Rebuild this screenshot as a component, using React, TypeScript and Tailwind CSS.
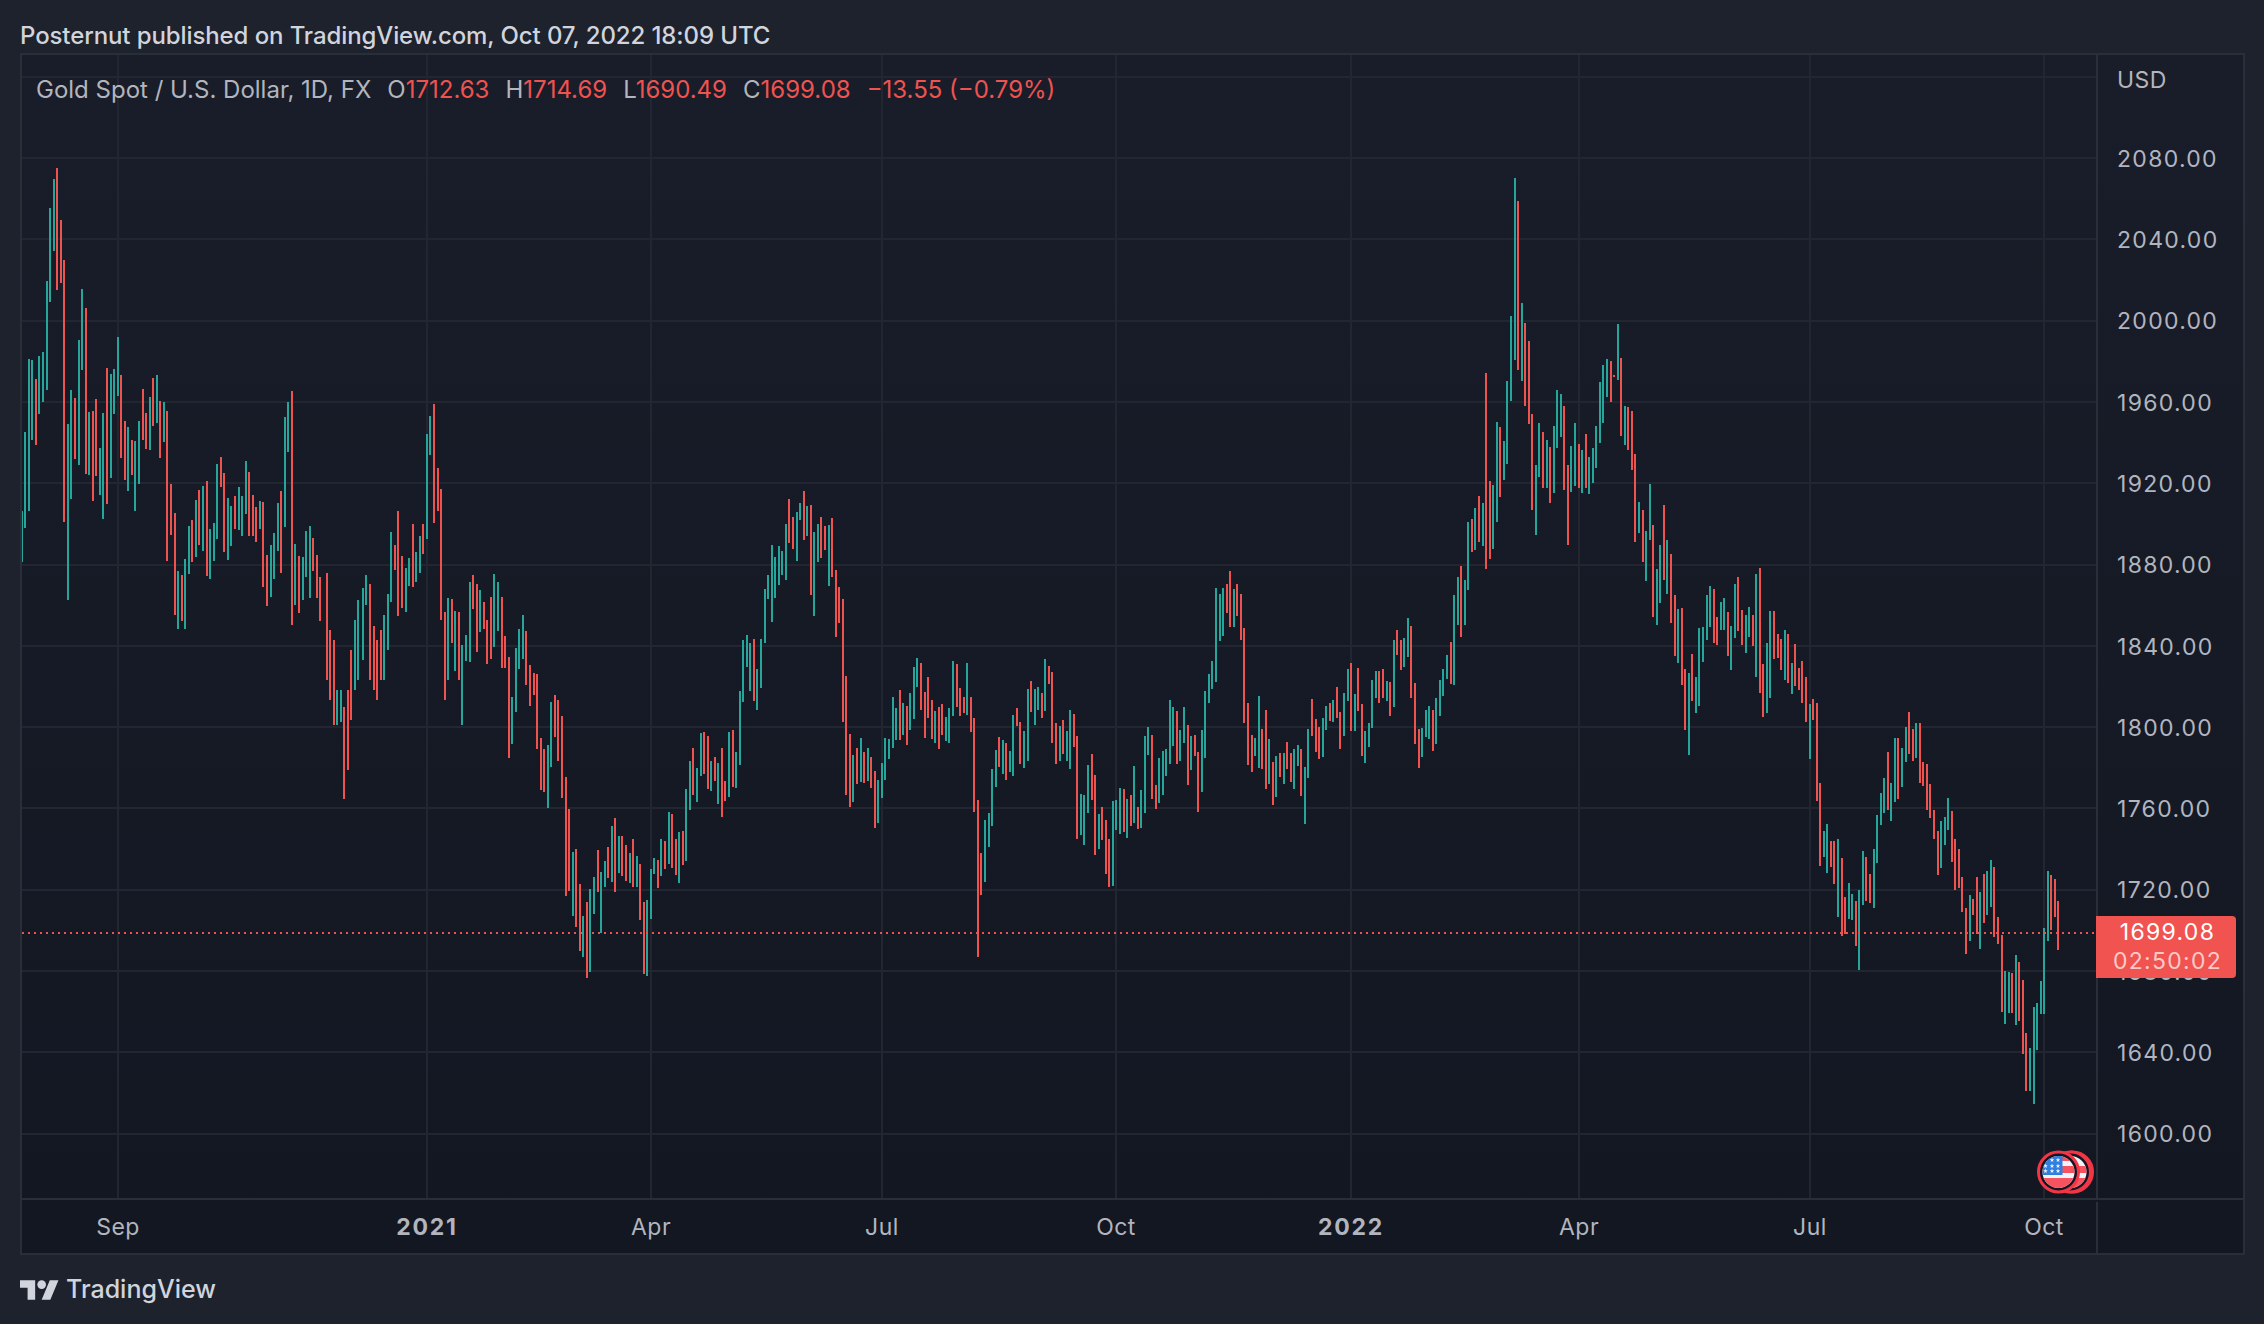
const crops = [
  {
    ox: 0, oy: 130, sy: 3,
    data: `g 66 1143 1296;g 75 906 1194;g 87 687 1143;g 96 690 930;r 108 747 945;g 117 678 852;g 129 666 816;g 141 453 780;g 150 234 516;g 162 147 363;r 171 114 480;r 183 270 459;r 192 390 1176;g 204 882 1410;g 213 780 1107;r 225 804 987;g 237 630 1005;g 246 477 720;r 258 534 1032;g 267 846 1035;r 279 843 1113;r 288 807 1038;g 300 954 1095;g 309 849 1167;r 321 714 1122;g 333 732 1044;g 342 717 852;g 354 621 798;r 363 735 984;r 375 873 1050;g 384 891 1083;r 396 930 1035;g 405 933 1143;g 417 873 1062;r 429 777 930;r 438 849 957;g 450 801 960;r 459 744 888;g 471 735 879;r 480 813 984;g 492 816 936;r 501 843 1293;r 513 1062 1215;r 525 1149 1455;g 534 1323 1497;r 546 1335 1473;g 555 1287 1497;g 567 1188 1332;r 576 1170 1296;g 588 1110 1281;r 597 1080 1245;g 609 1068 1263;r 621 1053 1338;g 630 1197 1347;g 642 1179 1293;g 651 1002 1227;r 663 981 1071;r 672 1029 1266;g 684 1104 1290;g 693 1128 1248;r 705 1098 1197;g 717 1071 1200;g 726 1098 1218;g 738 993 1152;r 747 1026 1218;r 759 1095 1218;r 768 1131 1236;g 780 1113 1197;r 789 1116 1371;r 801 1275 1428;g 813 1245 1401;g 822 1209 1347;g 834 1119 1263;r 843 1083 1329;g 855 861 1191;g 864 816 966;r 876 783 1485;g 885 1242 1425;r 897 1278 1449;g 909 1281 1410;g 918 1203 1341;g 930 1188 1404;r 939 1224 1323;r 951 1275 1404;r 960 1341 1473;g 1098 1335 1425;g 1173 1206 1416;r 1185 1245 1320;r 1194 1143 1458;r 1206 1278 1434;g 1218 1314 1446;g 1227 1284 1368;r 1239 1182 1371;g 1248 1266 1356;g 1260 1218 1329;r 1269 1182 1272;g 1281 912 1227;g 1290 858 975;r 1302 822 1179;r 1314 1014 1143`,
  },
  {
    // bars that run below the first crop, page pixels
    ox: 0, oy: 0, sy: 1, sx: 1,
    data: `r 327 573 680;r 330 630 700;r 334 640 725;g 337 690 725;g 341 690 722;r 344 707 799;r 348 690 770;r 351 650 720;g 355 620 690;g 358 600 680;g 363 588 660;r 370 584 680;r 374 626 690;r 377 640 700;r 381 630 680;g 384 615 680;g 388 594 650;r 441 489 620;r 445 612 700;g 448 598 680`,
  },
  {
    ox: 450, oy: 480, sy: 3,
    data: `r 6 357 489;g 15 393 573;r 27 396 600;g 36 495 735;g 48 465 543;g 60 306 546;r 69 285 387;r 81 312 516;g 90 330 456;r 102 366 447;r 111 420 552;r 123 351 537;g 132 282 501;g 144 306 453;r 156 351 564;r 165 468 564;r 177 531 834;g 186 651 792;g 198 504 696;g 207 447 567;g 219 405 537;r 228 453 615;r 240 555 678;r 252 579 645;r 261 582 807;r 273 774 930;r 282 807 936;g 294 795 984;g 303 666 861;r 315 645 771;r 324 660 843;r 336 708 954;r 348 891 1248;r 357 987 1233;g 369 1116 1308;r 378 1107 1341;r 390 1212 1413;g 399 1308 1431;r 411 1266 1494;g 420 1227 1476;g 432 1191 1302;r 444 1110 1236;g 453 1176 1359;g 465 1143 1221;r 474 1101 1194;g 486 1038 1206;r 495 1014 1236;g 507 1068 1179;r 516 1068 1188;r 528 1095 1203;g 540 1119 1209;r 549 1077 1221;g 561 1128 1221;r 570 1152 1320;r 582 1266 1482;g 591 1260 1488;g 603 1167 1317;g 612 1134 1182;r 624 1140 1224;g 633 1077 1188;r 645 1083 1167;g 657 996 1152;r 666 1002 1164;r 678 1077 1185;g 687 1056 1209;r 699 1053 1155;g 708 927 1143;g 720 843 990;r 729 804 945;g 741 864 966;g 753 759 888;r 762 756 882;r 774 768 927;g 783 843 933;r 795 831 903;g 804 849 972;r 816 804 1011;r 825 903 963;g 837 756 951;r 849 750 921;g 858 816 924;g 870 633 855;g 879 480 666;g 891 465 561;g 900 489 633;r 912 477 663;g 921 567 690;g 933 477 624;g 945 327 489;g 954 285 357;g 966 195 426;g 975 231 354;g 987 198 315`,
  },
  {
    ox: 780, oy: 470, sy: 3,
    data: `g 6 243 315;g 18 162 330;r 27 87 219;r 39 141 237;g 51 126 273;g 60 99 150;r 72 63 210;g 81 108 198;r 93 105 375;g 102 186 438;g 114 162 276;r 123 141 264;r 135 168 240;g 147 165 348;r 156 144 321;r 168 300 501;r 177 351 459;r 189 387 756;r 198 618 975;r 210 792 1011;g 219 855 996;r 231 834 942;g 243 804 936;r 252 846 939;g 264 834 933;r 273 861 954;r 285 903 1074;g 294 930 1059;g 306 879 984;g 315 804 930;g 327 807 867;g 339 681 834;g 348 714 810;r 360 660 810;g 369 699 795;r 381 708 825;g 390 669 780;g 402 591 747;g 411 564 651;r 423 579 720;r 435 666 804;r 444 621 744;r 456 690 807;g 465 723 819;r 477 711 837;r 486 702 795;g 498 741 813;g 507 714 819;g 519 573 738;r 531 582 711;r 540 654 738;r 552 681 729;g 561 579 735;r 573 681 786;r 582 744 1026;r 594 990 1461;r 603 1149 1275;g 615 1050 1236;g 627 1029 1131;g 636 897 1068;g 648 840 951;r 657 801 891;g 669 810 912;r 678 819 930;g 690 843 906;g 699 735 918;r 711 714 768;r 720 756 882;g 732 783 894;g 744 657 873;r 753 633 726;g 765 657 765;g 774 651 720;r 786 669 744;g 795 567 723;r 807 588 642;r 816 606 819;r 828 759 882;g 840 768 873;r 849 750 852;g 861 783 873;g 870 720 897;r 882 732 831;r 891 798 1107;g 903 972 1095;g 912 975 1125;g 924 885 1029;r 936 852 990;r 945 915 1155;g 957 1032 1137;r 966 1011 1110;r 978 1050 1212;r 987 1107 1251`,
  },
  {
    ox: 1110, oy: 550, sy: 3,
    data: `g 9 753 1008;g 18 750 840;g 30 714 852;r 42 717 846;g 51 747 864;r 63 735 828;g 72 648 819;r 84 771 837;g 93 720 834;g 105 558 789;g 114 531 615;r 126 555 747;r 138 705 777;g 147 624 759;g 159 603 735;g 168 597 678;g 180 450 642;g 189 471 588;r 201 483 642;g 210 540 633;g 222 471 579;r 234 525 705;g 243 558 660;r 255 555 618;r 264 606 786;g 276 540 726;g 285 423 624;g 297 372 459;g 306 333 417;g 318 114 396;g 330 132 273;g 339 114 258;r 351 102 189;r 360 63 231;g 372 117 231;r 381 102 198;r 393 132 270;r 402 234 519;r 414 459 645;r 426 555 666;g 435 564 618;g 447 438 654;r 456 537 657;r 468 480 717;g 477 567 702;r 489 636 765;g 498 618 741;r 510 609 681;g 522 609 702;r 531 576 657;r 543 609 696;g 552 597 717;g 564 585 648;r 573 597 738;g 585 651 822;g 594 537 684;r 606 447 558;r 618 507 606;r 627 531 627;g 639 504 621;g 648 468 540;r 660 459 513;g 669 450 516;r 681 411 504;r 690 486 597;g 702 429 558;g 714 357 453;r 723 339 543;g 735 432 543;r 744 354 483;r 756 462 618;g 765 543 639;g 777 519 591;g 786 390 534;g 798 363 444;r 807 363 459;r 819 357 444;g 831 393 453;r 840 396 498;g 852 270 471;r 861 240 315;r 873 270 360;g 882 264 351;g 894 204 321;r 903 228 444;r 915 399 582;r 927 537 654;g 936 534 621;g 948 480 561;g 957 468 567;r 969 480 603;g 978 444 582`,
  },
  {
    ox: 1440, oy: 420, sy: 3,
    data: `g 0 780 888;g 9 747 828;g 21 705 777;r 33 666 792;g 42 525 795;g 54 471 615;r 63 438 651;g 75 480 615;g 84 306 510;r 96 297 396;g 105 264 390;r 117 228 366;g 129 249 378;r 150 183 417;g 159 195 387;r 180 21 231;g 192 63 180;g 288 135 345;r 384 135 375;g 426 90 219;g 447 111 222;r 585 102 366;g 597 246 339;r 609 270 426;g 618 333 483;g 630 192 360;r 639 315 591;g 651 447 615;g 660 375 549;r 672 255 480;g 681 360 522;r 693 402 609;r 705 525 708;g 714 567 729;r 726 564 795;r 735 747 930;g 747 759 1005;r 756 702 843;g 768 771 879;g 777 624 858;g 789 621 726;g 801 525 660;g 810 498 621;r 822 507 669;r 831 591 675;g 843 546 630;g 852 534 630;r 864 576 708;g 873 618 750;g 885 492 654;r 894 471 633;r 906 570 675;g 918 585 699;g 927 561 651;r 939 585 678;g 948 462 771;r 960 444 819;r 969 732 891;g 981 669 879`,
  },
  {
    // top of the 2022 spike, x still in crop units, y in page pixels
    ox: 1440, oy: 0, sy: 1,
    data: `r 138 373 569;g 171 422 522;g 201 381 464;g 213 316 401;g 225 178 360;r 234 201 370;g 246 303 381;r 255 323 406;r 267 341 424;r 276 414 510;g 297 423 477;r 309 432 488;g 321 440 488;r 330 447 503;g 342 426 493;g 351 390 448;g 363 394 437;r 372 406 490;g 393 446 492;g 405 423 486;r 417 444 488;r 438 434 488;g 459 448 483;g 468 426 468;g 480 382 443;g 489 365 423;g 501 359 397;r 513 361 402;r 522 375 377;g 534 324 380;r 543 358 436;g 555 406 445;r 564 407 450;r 576 411 470`,
  },
  {
    ox: 1770, oy: 580, sy: 2.904,
    data: `g 1 90 343;r 12 90 229;r 24 157 226;r 33 171 261;g 45 145 290;r 54 157 299;g 66 241 331;r 75 186 308;r 87 256 319;r 96 235 357;r 108 282 412;g 120 360 520;r 129 346 407;r 141 357 642;r 150 589 830;g 162 729 804;g 171 709 851;r 183 758 833;r 192 758 883;g 204 752 979;r 216 807 1034;r 225 920 1028;g 237 880 984;g 246 912 987;r 258 932 1063;g 267 900 1132;g 279 787 944;r 288 804 932;r 300 854 938;g 312 781 952;g 321 682 822;g 333 618 711;g 342 575 677;r 354 499 668;g 363 589 700;g 375 459 645;r 384 459 636;g 396 488 601;g 408 427 528;r 417 383 505;r 429 433 526;g 438 415 517;r 450 415 589;r 459 528 598;r 471 534 668;r 480 592 691;r 492 668 752;r 504 729 857;g 513 700 836;g 525 688 769;g 534 633 726;r 546 671 819;r 555 752 900;r 567 781 894;r 576 862 964;r 588 952 1086;g 600 915 1048;r 609 926 973;r 621 862 1028;g 630 906 1071;r 642 854 996;g 651 845 973;g 663 813 950;r 672 833 1037;r 684 979 1057;r 696 1031 1254;g 705 1135 1289;g 717 1138 1257;r 726 1141 1257;g 738 1089 1292;r 747 1109 1281;r 759 1161 1376;r 768 1315 1484;g 780 1359 1484;g 792 1240 1522;g 801 1228 1365;g 813 1164 1260;g 822 1010 1260;g 834 845 1048;r 843 857 1016;r 855 868 979;r 864 932 1074`,
  },
];

// page pixels, the svg viewBox starts at the plot's corner
const bars = crops.flatMap((c) =>
  c.data.split(";").map((s) => {
    const [col, x, t, b] = s.split(" ");
    const sx = c.sx ?? 3;
    const top = c.oy + Number(t) / c.sy;
    return {
      col,
      x: Math.round(c.ox + Number(x) / sx - 1),
      y: Math.round(top),
      h: Math.max(2, Math.round((Number(b) - Number(t)) / c.sy)),
    };
  }),
);

const gridX = [118, 427, 651, 882, 1116, 1351, 1579, 1810, 2044];
const gridY = Array.from({ length: 14 }, (_, i) => 76.7 + i * 81.3);
const prices = ["2080.00", "2040.00", "2000.00", "1960.00", "1920.00", "1880.00", "1840.00", "1800.00", "1760.00", "1720.00", "1680.00", "1640.00", "1600.00"];

function Star({ x, y }: { x: number; y: number }) {
  const pts = Array.from({ length: 10 }, (_, i) => {
    const r = i % 2 ? 1 : 2.4;
    const a = (Math.PI / 5) * i - Math.PI / 2;
    return `${x + r * Math.cos(a)},${y + r * Math.sin(a)}`;
  }).join(" ");
  return <polygon points={pts} fill="#f0f3fa" />;
}

function Marks() {
  const stars = [15, 21, 26].flatMap((y) => [13.5, 20, 26].map((x) => ({ x, y })));
  return (
    <svg viewBox="0 0 66 54" className="block w-[66px] h-[54px]">
      <defs>
        <clipPath id="us-a">
          <circle cx="26.5" cy="27" r="16" />
        </clipPath>
        <clipPath id="us-b">
          <circle cx="38.5" cy="27" r="16" />
        </clipPath>
      </defs>
      <circle cx={40.5} cy={27} r={20} fill="#131722" stroke="#f23645" strokeWidth={3} />
      <circle cx={38.5} cy={27} r={20} fill="#131722" stroke="#f23645" strokeWidth={3} />
      <g clipPath="url(#us-b)">
        <rect x="20" y="10" width="36" height="34" fill="#f0f3fa" />
        <rect x="20" y="21" width="36" height="7" fill="#f7525f" />
        <rect x="20" y="33" width="36" height="11" fill="#f7525f" />
      </g>
      <circle cx={26.5} cy={27} r={20} fill="#131722" stroke="#f23645" strokeWidth={3} />
      <g clipPath="url(#us-a)">
        <rect x="10" y="11" width="34" height="33" fill="#f0f3fa" />
        <rect x="10" y="11" width="34" height="5" fill="#f7525f" />
        <rect x="10" y="21" width="34" height="7" fill="#f7525f" />
        <rect x="10" y="33" width="34" height="11" fill="#f7525f" />
        <rect x="10" y="11" width="20.5" height="19" fill="#2f7fe0" />
        {stars.map((s) => (
          <Star key={`${s.x}-${s.y}`} x={s.x} y={s.y} />
        ))}
      </g>
    </svg>
  );
}

export default function App() {
  return (
    <div className="w-[2264px] h-[1324px] bg-[#1e222d] flex flex-col overflow-hidden font-['Inter',sans-serif]">
      <div className="h-[53px] pl-5 pt-[19px] flex items-center text-[24px] text-[#d1d4dc] font-medium whitespace-nowrap tracking-[-0.1px]">
        Posternut published on TradingView.com, Oct 07, 2022 18:09 UTC
      </div>

      <div className="ml-5 w-[2225px] h-[1202px] border-2 border-[#2a2e39] flex flex-col">
        <div className="flex h-[1143px]">
          <div className="relative w-[2074px] bg-gradient-to-b from-[#191d29] to-[#131722]">
            <svg viewBox="22 55 2074 1143" className="block w-[2074px] h-[1143px]" shapeRendering="crispEdges">
              {gridY.map((y) => (
                <rect key={y} x={22} y={Math.round(y) - 1} width={2074} height={2} fill="#222631" />
              ))}
              {gridX.map((x) => (
                <rect key={x} x={x - 1} y={55} width={2} height={1143} fill="#222631" />
              ))}
              {bars.map((b, i) => (
                <rect key={i} x={b.x} y={b.y} width={2} height={b.h} fill={b.col === "g" ? "#26a69a" : "#ef5350"} />
              ))}
              <line x1={22} x2={2096} y1={933} y2={933} stroke="#ef5350" strokeWidth={2} strokeDasharray="2 4" />
            </svg>

            <div className="absolute left-[14px] top-[21px] flex items-center gap-4 text-[24px] text-[#b2b5be] whitespace-nowrap leading-7">
              <span>Gold Spot / U.S. Dollar, 1D, FX</span>
              <span>
                O<span className="text-[#ef5350]">1712.63</span>
              </span>
              <span>
                H<span className="text-[#ef5350]">1714.69</span>
              </span>
              <span>
                L<span className="text-[#ef5350]">1690.49</span>
              </span>
              <span>
                C<span className="text-[#ef5350]">1699.08</span>
              </span>
              <span className="text-[#ef5350]">−13.55 (−0.79%)</span>
            </div>

            <div className="absolute -right-[2px] bottom-[-1px]">
              <Marks />
            </div>
          </div>

          <div className="relative flex-1 border-l-2 border-[#2a2e39] bg-gradient-to-b from-[#191d29] to-[#131722] pl-[19px] text-[23px] text-[#b2b5be] tracking-[1.3px]">
            <div className="h-[63.35px] flex items-center pb-3 tracking-[0.5px]">USD</div>
            {prices.map((p) => (
              <div key={p} className="h-[81.3px] flex items-center">
                {p}
              </div>
            ))}
            <div className="absolute -left-[2px] top-[861px] w-[140px] h-[62px] bg-[#f05350] rounded-r-[4px] pl-[3px] flex flex-col items-center justify-center text-white leading-[29px]">
              <span>1699.08</span>
              <span className="text-white/70">02:50:02</span>
            </div>
          </div>
        </div>

        <div className="flex flex-1 border-t-2 border-[#2a2e39] bg-[#131722] pt-[2px] text-[23px] text-[#b2b5be] tracking-[0.5px]">
          <div className="w-[2074px] flex items-center whitespace-nowrap">
            <div className="ml-[96px] w-0 flex justify-center">Sep</div>
            <div className="ml-[309px] w-0 flex justify-center font-bold tracking-[1.8px]">2021</div>
            <div className="ml-[224px] w-0 flex justify-center">Apr</div>
            <div className="ml-[231px] w-0 flex justify-center">Jul</div>
            <div className="ml-[234px] w-0 flex justify-center">Oct</div>
            <div className="ml-[235px] w-0 flex justify-center font-bold tracking-[1.8px]">2022</div>
            <div className="ml-[228px] w-0 flex justify-center">Apr</div>
            <div className="ml-[231px] w-0 flex justify-center">Jul</div>
            <div className="ml-[234px] w-0 flex justify-center">Oct</div>
          </div>
          <div className="flex-1 border-l-2 border-[#2a2e39]" />
        </div>
      </div>

      <div className="flex-1 pl-5 flex items-center gap-[7px] text-[25px] font-medium text-[#d1d4dc]">
        <svg viewBox="0 4 36 18" className="w-[39px] h-[20px] fill-[#d1d4dc]">
          <path d="M14 22H7V11H0V4h14v18zM28 22h-8l7.5-18h8L28 22z" />
          <circle cx="20" cy="8" r="4" />
        </svg>
        <span>TradingView</span>
      </div>
    </div>
  );
}
